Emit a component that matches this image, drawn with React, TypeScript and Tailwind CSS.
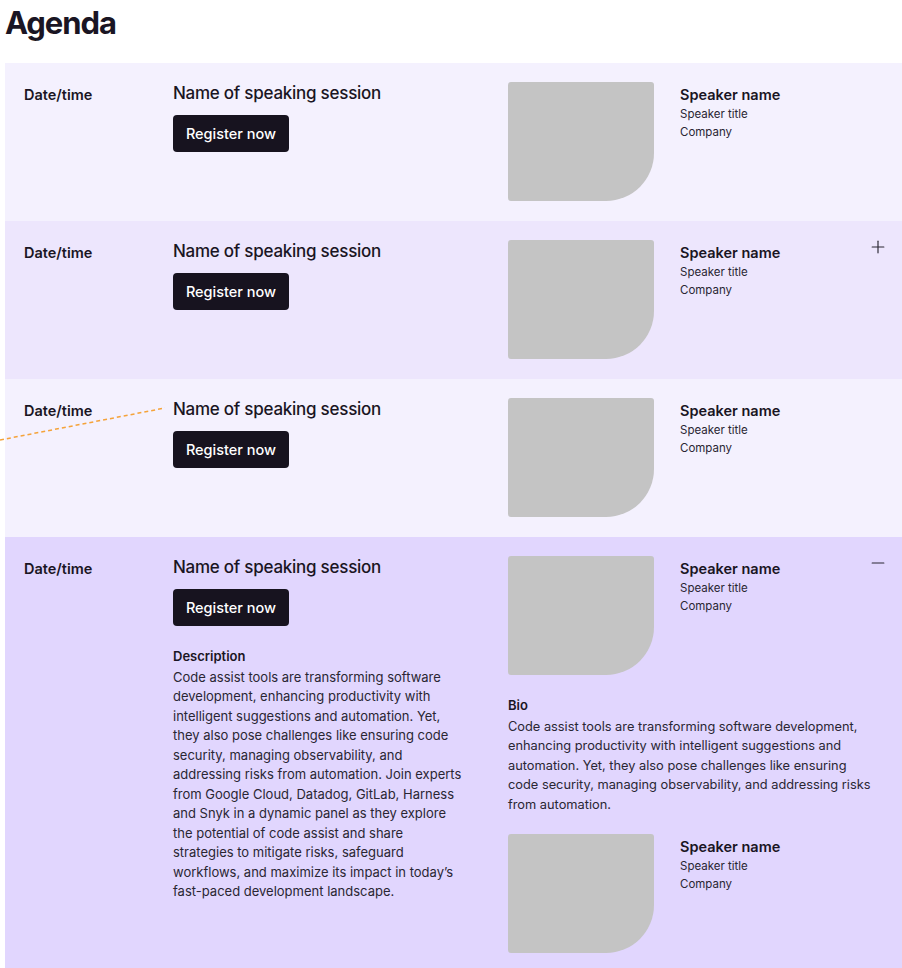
import { Plus, Minus } from 'lucide-react'

type Session = {
  bg: string
  icon?: 'plus' | 'minus'
  expanded?: boolean
}

const sessions: Session[] = [
  { bg: 'bg-[#f4f1fe]' },
  { bg: 'bg-[#ede6fd]', icon: 'plus' },
  { bg: 'bg-[#f4f1fe]' },
  { bg: 'bg-[#e1d6fe]', icon: 'minus', expanded: true },
]

const blurb =
  'Code assist tools are transforming software development, enhancing productivity with intelligent suggestions and automation. Yet, they also pose challenges like ensuring code security, managing observability, and addressing risks from automation.'

const description =
  'Code assist tools are transforming software development, enhancing productivity with intelligent suggestions and automation. Yet, they also pose challenges like ensuring code security, managing observability, and addressing risks from automation. Join experts from Google Cloud, Datadog, GitLab, Harness and Snyk in a dynamic panel as they explore the potential of code assist and share strategies to mitigate risks, safeguard workflows, and maximize its impact in today\u2019s fast-paced development landscape.'

function Speaker() {
  return (
    <div className="flex gap-[26px]">
      <div className="w-[146px] h-[119px] shrink-0 bg-[#c4c4c4] rounded-[3px] rounded-br-[48px]" />
      <div className="pt-[3px]">
        <p className="text-[14.5px] font-semibold leading-[20px] text-[#1a1523]">Speaker name</p>
        <p className="text-[11.5px] leading-[18px] text-[#2a2633]">Speaker title</p>
        <p className="text-[11.5px] leading-[18px] text-[#2a2633]">Company</p>
      </div>
    </div>
  )
}

function SessionRow({ s }: { s: Session }) {
  return (
    <div className={`relative flex pl-[19px] pt-[19px] pb-[20px] ${s.bg}`}>
      <div className="w-[149px] shrink-0 pt-[3px]">
        <p className="text-[14.5px] font-semibold leading-[20px] text-[#1a1523]">Date/time</p>
      </div>

      <div className="w-[335px] shrink-0">
        <h3 className="text-[17px] font-medium leading-[22px] tracking-[-0.015em] text-[#1a1523]">
          Name of speaking session
        </h3>
        <button className="mt-[11px] h-[37px] w-[116px] rounded-[4px] bg-[#17131f] text-[14.5px] font-medium text-white">
          Register now
        </button>
        {s.expanded && (
          <div className="mt-[21px] w-[292px]">
            <p className="text-[13px] font-semibold leading-[18px] text-[#1a1523]">Description</p>
            <p className="mt-[3px] text-[13px] leading-[19.45px] text-[#2a2633]">{description}</p>
          </div>
        )}
      </div>

      <div className="flex-1 min-w-0">
        <Speaker />
        {s.expanded && (
          <>
            <div className="mt-[21px] w-[368px]">
              <p className="text-[13px] font-semibold leading-[18px] text-[#1a1523]">Bio</p>
              <p className="mt-[3px] text-[12.8px] leading-[19.4px] text-[#2a2633]">{blurb}</p>
            </div>
            <div className="mt-[20px]">
              <Speaker />
            </div>
          </>
        )}
      </div>

      {s.icon === 'plus' && (
        <Plus className="absolute right-[14px] top-[16px] text-[#2a2633]" size={20} strokeWidth={1.4} />
      )}
      {s.icon === 'minus' && (
        <Minus className="absolute right-[14px] top-[16px] text-[#2a2633]" size={20} strokeWidth={1.4} />
      )}
    </div>
  )
}

export default function App() {
  return (
    <div className="relative min-h-screen bg-white pl-[5px] font-['Inter','Liberation_Sans',sans-serif] text-[#1a1523]">
      <h1 className="h-[63px] pt-[3px] text-[31px] font-bold leading-[40px] tracking-[-0.035em] text-[#1a1523]">
        Agenda
      </h1>

      <div className="flex flex-col">
        {sessions.map((s, i) => (
          <SessionRow key={i} s={s} />
        ))}
      </div>

      {/* design annotation — dashed connector into the third row */}
      <svg className="absolute left-0 top-[405px] pointer-events-none" width="170" height="40">
        <line x1="0" y1="35" x2="165" y2="3" stroke="#f5a33a" strokeWidth="1.5" strokeDasharray="4 3" />
      </svg>
    </div>
  )
}
